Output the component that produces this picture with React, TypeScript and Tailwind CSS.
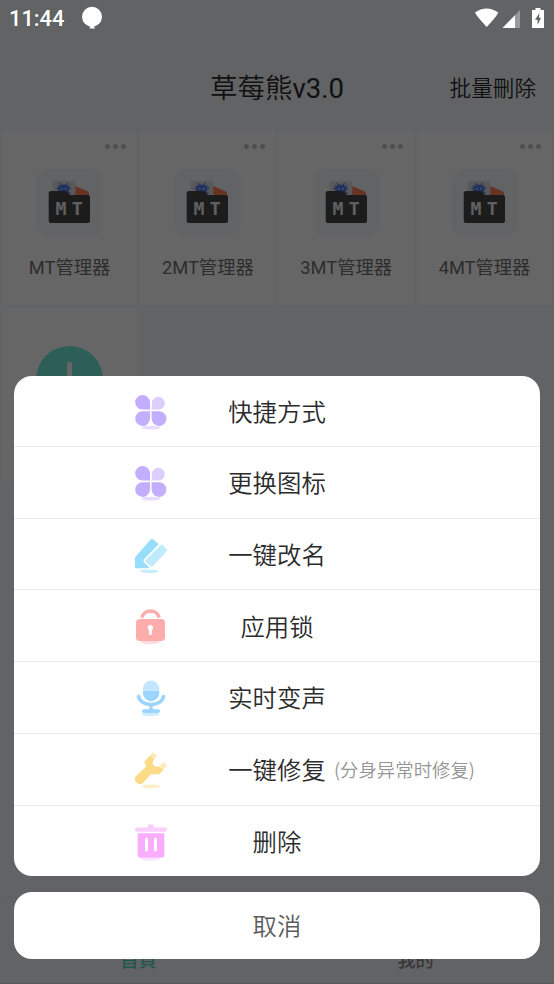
import type { ReactNode } from 'react'

interface MenuItem {
  label: string
  hint?: string
  icon: ReactNode
}

const apps = ['MT管理器', '2MT管理器', '3MT管理器', '4MT管理器']

function CloverIcon() {
  return (
    <svg className="h-9 w-9" viewBox="0 0 36 36">
      <g fill="#c3adff">
        <path d="M9.500 1A7.500 7.500 0 0 1 17 8.500V15.600H9.500A7.300 7.300 0 0 1 9.500 1Z" />
        <path d="M9.500 17.200H17V24.600A7.400 7.400 0 1 1 9.500 17.200Z" />
        <path d="M18.600 17.200H25.800A7.400 7.400 0 1 1 18.600 24.600Z" />
      </g>
      <path d="M25.400 2.800A6.400 6.400 0 0 1 25.400 15.600H18.700V9.400A6.600 6.600 0 0 1 25.400 2.800Z" fill="#dccfff" />
      <ellipse cx="17.800" cy="33.700" rx="9.300" ry="1.900" fill="#e6dcff" />
    </svg>
  )
}

function PencilIcon() {
  return (
    <svg className="h-9 w-9" viewBox="0 0 36 36">
      <path
        d="M2 20.200L17 3.200Q18.800 1.300 20.700 2.700L25.600 7.200L10.900 22.600Q9.800 24 11 25.200L16.300 30.200L15.300 31.200H3Q2 31.200 2 30.200Z"
        fill="#98ddfd"
      />
      <path
        d="M12.500 23.200L27.400 8.200Q28.600 7 29.800 8.200L33.500 11.900Q34.600 13.200 33.500 14.500L20 29Q18.800 30.200 17.500 29L12.500 24.700Q11.700 24 12.500 23.200Z"
        fill="#c0eafe"
      />
      <ellipse cx="16.300" cy="34.200" rx="9.300" ry="1.700" fill="#c6ecfd" />
    </svg>
  )
}

function LockIcon() {
  return (
    <svg className="h-9 w-9" viewBox="0 0 36 36">
      <ellipse cx="17.200" cy="33.200" rx="9.500" ry="2" fill="#ffdcdc" />
      <path d="M8.900 8.700C11 -0.200 24 -0.200 26.100 8.700" fill="none" stroke="#ffacac" strokeWidth="3.600" />
      <rect x="3" y="10" width="29" height="22" rx="3.800" fill="#ffacac" />
      <circle cx="17.400" cy="18.500" r="2.600" fill="#fff" />
      <rect x="15.900" y="19" width="3" height="7" rx="1.500" fill="#fff" />
    </svg>
  )
}

function MicIcon() {
  return (
    <svg className="h-9 w-9" viewBox="0 0 36 36">
      <ellipse cx="17.700" cy="34.200" rx="9" ry="1.800" fill="#cfecff" />
      <path d="M10 10.700H26.300V13A8.150 8.150 0 0 1 10 13Z" fill="#9bd5ff" />
      <path d="M10 10.700V8.700A8.150 8.150 0 0 1 26.300 8.700V10.700Z" fill="#c3e6ff" />
      <path d="M5.500 16.500C8 27.300 28.200 27.300 30.600 16.500M18 24.800V30" fill="none" stroke="#9bd5ff" strokeWidth="3.500" strokeLinecap="round" />
      <rect x="9" y="29.300" width="18" height="3.700" rx="1.800" fill="#9bd5ff" />
    </svg>
  )
}

function WrenchIcon() {
  return (
    <svg className="h-9 w-9" viewBox="0 0 36 36">
      <path d="M17 3.600L20.200 0.500L24 4.100L21 7.200ZM26.500 14.200L30.600 10L34.200 13.700L30 18Z" fill="#fdeab8" />
      <path
        d="M17 3.500L21.300 7.200L19.800 9.600V12.600L22.300 14.400H26.300L30.200 18L26.600 21.900L21.500 22.400L18 22.200L9.700 31.200Q6.600 33 3.800 31Q0.600 28 2.500 24.500L13.500 14.200L10.900 10.200Z"
        fill="#fbdb88"
      />
      <ellipse cx="18" cy="34.200" rx="9" ry="1.700" fill="#fdedc4" />
    </svg>
  )
}

function TrashIcon() {
  return (
    <svg className="h-9 w-9 overflow-visible" viewBox="0 0 36 36">
      <ellipse cx="17.500" cy="34" rx="10" ry="2.700" fill="#fce0ff" />
      <path
        d="M4 3.500H14.600A3.200 3.200 0 0 1 21 3.500H32A2.050 2.050 0 0 1 32 7.700H4A2.050 2.050 0 0 1 4 3.500Z"
        fill="#fbcdff"
      />
      <path d="M4.700 9.200H31.300V31.500Q31.300 33.500 29.300 33.500H6.700Q4.700 33.500 4.700 31.500Z" fill="#faacff" />
      <rect x="12" y="13.600" width="3" height="13.800" rx="1.500" fill="#fff" />
      <rect x="21" y="13.600" width="3" height="13.800" rx="1.500" fill="#fff" />
    </svg>
  )
}

function FolderLogo() {
  return (
    <svg className="h-[67px] w-[67px]" viewBox="0 0 67 67">
      <rect width="67" height="67" rx="12" fill="#f4f7fa" />
      <rect x="16.700" y="12" width="22.600" height="20" rx="1.500" fill="#dedee0" />
      <path d="M39.300 17L52 22.500Q53 23 53 24V30H39.300Z" fill="#ff7f5c" />
      <path
        d="M24 14L26 17.500M31.500 14L29.500 17.500M20.500 19.500H35M21 24H34.500M22 16.500L24 18.500M33.500 16.500L31.500 18.500"
        stroke="#4a78ee"
        strokeWidth="1.300"
      />
      <circle cx="27.700" cy="21" r="5.400" fill="#4a78ee" />
      <circle cx="25.700" cy="19.700" r="0.900" fill="#dedee0" />
      <circle cx="29.800" cy="19.700" r="0.900" fill="#dedee0" />
      <path
        d="M15 22H28.500Q30 22 31 23L34 26H52Q54 26 54 28V52Q54 54 52 54H14.700Q12.700 54 12.700 52V24Q12.700 22 15 22Z"
        fill="#464646"
      />
      <text x="19.500 35.700" y="45.500" fill="#f0f0f0" fontSize="18.200" fontWeight="bold" fontFamily="DejaVu Sans Mono, monospace">
        MT
      </text>
    </svg>
  )
}

function StatusBar() {
  return (
    <div className="flex h-9 items-center pl-[9px] text-white">
      <span className="w-[54px] pt-0.5 font-[Roboto,sans-serif] text-[21.8px] leading-9 font-medium">11:44</span>
      <svg className="ml-[18px] h-6 w-[22px]" viewBox="0 0 22 24">
        <circle cx="11" cy="10.800" r="10" fill="#fff" />
        <path d="M8.500 20H13.500L12.500 21.300H13.800V22.500H8.700V21.300H9.700Z" fill="#fff" />
      </svg>
      <svg className="ml-auto h-6 w-[79px]" viewBox="0 0 79 24">
        <path d="M0 6.500Q11.500 -1.300 23.300 6.500Q22 10 11.700 21Q1.500 10 0 6.500Z" fill="#fff" />
        <path d="M45 4V22H27.700Z" fill="#fff" fillOpacity="0.350" />
        <path d="M40 9.200V22H27.500Z" fill="#fff" />
        <path d="M60.500 2H65.500V4H69V22H57V4H60.500Z" fill="#fff" />
        <path d="M64.500 7L60 13.800H62.600V19L66 11.700H63.900Z" fill="#626365" />
      </svg>
    </div>
  )
}

const menu: MenuItem[] = [
  { label: '快捷方式', icon: <CloverIcon /> },
  { label: '更换图标', icon: <CloverIcon /> },
  { label: '一键改名', icon: <PencilIcon /> },
  { label: '应用锁', icon: <LockIcon /> },
  { label: '实时变声', icon: <MicIcon /> },
  { label: '一键修复', hint: '(分身异常时修复)', icon: <WrenchIcon /> },
  { label: '删除', icon: <TrashIcon /> },
]

function AppTile({ name }: { name: string }) {
  return (
    <div className="flex h-[174.5px] flex-col items-center bg-white pt-[13px]">
      <div className="flex gap-[3px] self-end pr-[11px]">
        <i className="h-[5px] w-[5px] rounded-full bg-[#c4c4c4]" />
        <i className="h-[5px] w-[5px] rounded-full bg-[#c4c4c4]" />
        <i className="h-[5px] w-[5px] rounded-full bg-[#c4c4c4]" />
      </div>
      <div className="mt-[20.5px]">
        <FolderLogo />
      </div>
      <span className="mt-[17.5px] text-[18.3px] leading-7 whitespace-nowrap text-[#707070]">{name}</span>
    </div>
  )
}

function HomeScreen() {
  return (
    <div className="flex h-full flex-col bg-[#f5f7fb]">
      <header className="mt-9 grid h-[94.5px] grid-cols-3 items-center text-[#2b2b2b]">
        <span />
        <h1 className="pt-2.5 text-center text-[27.5px] font-[350] whitespace-nowrap">
          草莓熊<span className="font-normal">v3.0</span>
        </h1>
        <span className="pt-3 pr-[18px] text-right text-[21.6px] font-[350]">批量刪除</span>
      </header>
      <main className="grid flex-1 grid-cols-4 content-start gap-[2.7px] px-[1.7px]">
        {apps.map((name) => (
          <AppTile key={name} name={name} />
        ))}
        <div className="flex h-[174.5px] justify-center bg-white pt-[38px]">
          <svg className="h-[67px] w-[67px]" viewBox="0 0 67 67">
            <circle cx="33.500" cy="33.500" r="33.500" fill="#70eddc" />
            <path d="M33.500 18.200V49M18 33.500H49" stroke="#fff" strokeWidth="5" strokeLinecap="round" />
          </svg>
        </div>
      </main>
      <nav className="grid h-[87px] grid-cols-2 items-end border-t border-b border-t-[#f0f2f6] border-b-[#dcdcdf] pb-2 text-center text-[18.3px] leading-7 font-medium">
        <span className="text-[#4fd9c0]">首頁</span>
        <span className="text-[#8a8a8a]">我的</span>
      </nav>
    </div>
  )
}

export default function App() {
  return (
    <div className="relative h-[984px] w-[554px] overflow-hidden font-[Roboto,'Noto_Sans_CJK_SC',sans-serif]">
      <HomeScreen />
      <div className="absolute inset-0 flex flex-col bg-black/60">
        <StatusBar />
        <div className="mt-auto flex flex-col gap-4 px-3.5 pb-[25px] font-['Noto_Sans_CJK_SC',sans-serif] font-[350]">
          <ul className="divide-y divide-[#e9eaf0] overflow-hidden rounded-[18px] bg-white">
            {menu.map((item) => (
              <li
                key={item.label}
                className="grid h-[71.7px] grid-cols-[119px_288px_1fr] items-center pt-0.5 first:h-[71.2px] last:h-[70.5px]"
              >
                <span />
                <div className="grid grid-cols-[36px_216px_36px] items-center">
                  {item.icon}
                  <span className="pb-0.5 text-center text-[24.4px] leading-9 whitespace-nowrap text-[#2b2b2b]">{item.label}</span>
                </div>
                {item.hint && (
                  <span className="-ml-[87px] pb-0.5 text-[18.4px] leading-7 whitespace-nowrap text-[#959595]">{item.hint}</span>
                )}
              </li>
            ))}
          </ul>
          <button type="button" className="h-[67px] rounded-[18px] bg-white text-[24.4px] text-[#5c5c5c]">
            取消
          </button>
        </div>
      </div>
    </div>
  )
}
